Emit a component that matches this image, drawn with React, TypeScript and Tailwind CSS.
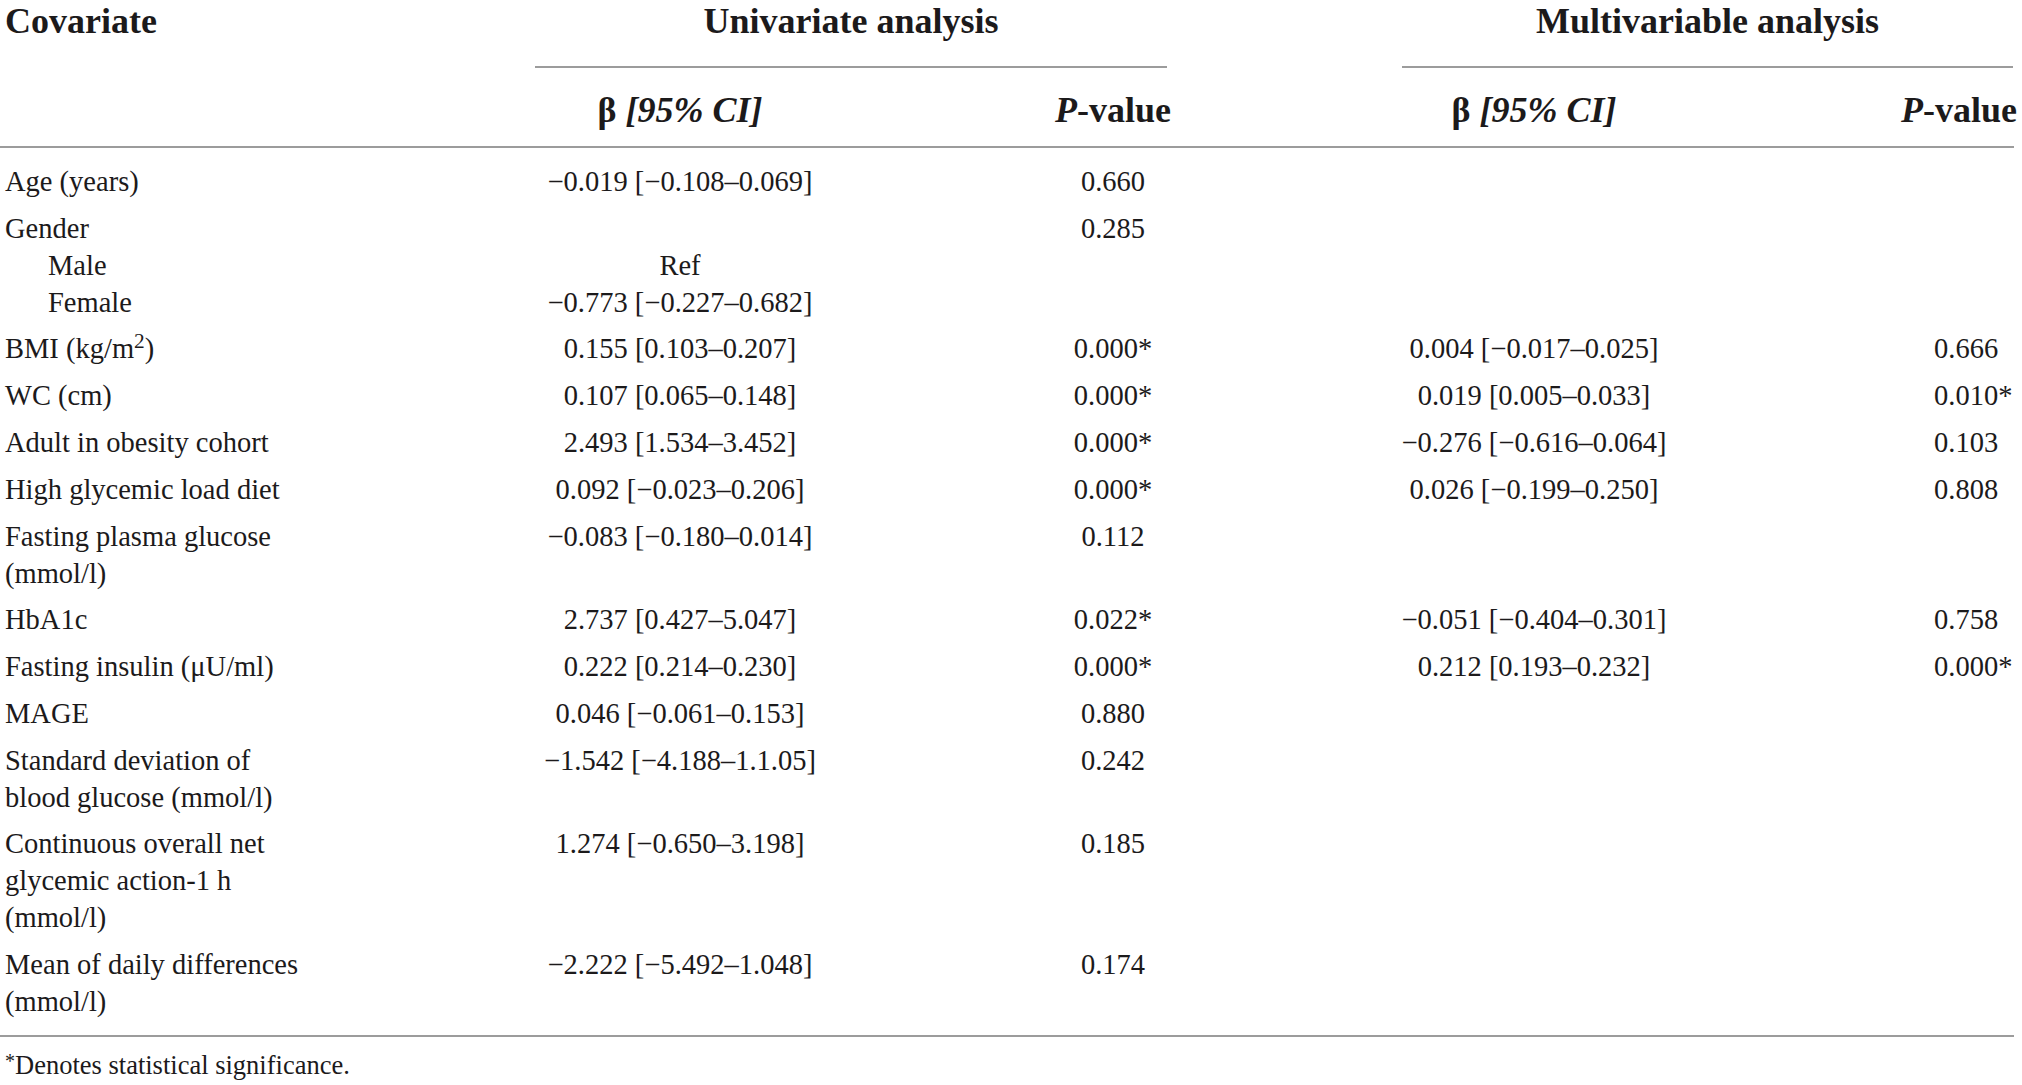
import React from 'react';

type Row = {
  label: React.ReactNode;
  indent?: boolean;
  ub?: string;
  up?: string;
  mb?: string;
  mp?: string;
  pt?: boolean;
  pb?: boolean;
};

const rows: Row[] = [
  { label: 'Age (years)', ub: '−0.019 [−0.108–0.069]', up: '0.660', pt: true, pb: true },
  { label: 'Gender', up: '0.285', pt: true },
  { label: 'Male', indent: true, ub: 'Ref' },
  { label: 'Female', indent: true, ub: '−0.773 [−0.227–0.682]', pb: true },
  {
    label: (
      <>
        BMI (kg/m<sup>2</sup>)
      </>
    ),
    ub: '0.155 [0.103–0.207]',
    up: '0.000*',
    mb: '0.004 [−0.017–0.025]',
    mp: '0.666',
    pt: true,
    pb: true,
  },
  { label: 'WC (cm)', ub: '0.107 [0.065–0.148]', up: '0.000*', mb: '0.019 [0.005–0.033]', mp: '0.010*', pt: true, pb: true },
  { label: 'Adult in obesity cohort', ub: '2.493 [1.534–3.452]', up: '0.000*', mb: '−0.276 [−0.616–0.064]', mp: '0.103', pt: true, pb: true },
  { label: 'High glycemic load diet', ub: '0.092 [−0.023–0.206]', up: '0.000*', mb: '0.026 [−0.199–0.250]', mp: '0.808', pt: true, pb: true },
  {
    label: (
      <>
        Fasting plasma glucose
        <br />
        (mmol/l)
      </>
    ),
    ub: '−0.083 [−0.180–0.014]',
    up: '0.112',
    pt: true,
    pb: true,
  },
  { label: 'HbA1c', ub: '2.737 [0.427–5.047]', up: '0.022*', mb: '−0.051 [−0.404–0.301]', mp: '0.758', pt: true, pb: true },
  { label: 'Fasting insulin (μU/ml)', ub: '0.222 [0.214–0.230]', up: '0.000*', mb: '0.212 [0.193–0.232]', mp: '0.000*', pt: true, pb: true },
  { label: 'MAGE', ub: '0.046 [−0.061–0.153]', up: '0.880', pt: true, pb: true },
  {
    label: (
      <>
        Standard deviation of
        <br />
        blood glucose (mmol/l)
      </>
    ),
    ub: '−1.542 [−4.188–1.1.05]',
    up: '0.242',
    pt: true,
    pb: true,
  },
  {
    label: (
      <>
        Continuous overall net
        <br />
        glycemic action-1 h
        <br />
        (mmol/l)
      </>
    ),
    ub: '1.274 [−0.650–3.198]',
    up: '0.185',
    pt: true,
    pb: true,
  },
  {
    label: (
      <>
        Mean of daily differences
        <br />
        (mmol/l)
      </>
    ),
    ub: '−2.222 [−5.492–1.048]',
    up: '0.174',
    pt: true,
    pb: true,
  },
];

const Rule: React.FC<{ className?: string }> = ({ className = '' }) => (
  <div className={`h-[2px] bg-[#9c9c9c] ${className}`} />
);

const BodyRow: React.FC<{ row: Row }> = ({ row }) => {
  const pad = `${row.pt ? 'pt-[4.9px]' : ''} ${row.pb ? 'pb-[4.9px]' : ''}`;
  return (
    <div className={`grid grid-cols-[535px_290px_576px_266px_234px_1fr] leading-[37px] ${pad}`}>
      <div className={row.indent ? 'pl-[48px]' : 'pl-[5px]'}>{row.label}</div>
      <div className="text-center whitespace-nowrap">{row.ub}</div>
      <div className="text-center">{row.up}</div>
      <div className="text-center whitespace-nowrap">{row.mb}</div>
      <div />
      <div className="pl-[33px]">{row.mp}</div>
    </div>
  );
};

export default function App() {
  return (
    <div className="w-[2022px] min-h-[1085px] bg-white text-[#1c1a1b] font-['Liberation_Serif',serif] text-[28.5px]">
      <div className="w-[2014px]">
        {/* group headers */}
        <div className="grid grid-cols-[535px_632px_235px_611px] font-bold text-[36px] leading-[42px]">
          <div className="pl-[5px]">Covariate</div>
          <div className="text-center">Univariate analysis</div>
          <div />
          <div className="text-center">Multivariable analysis</div>
        </div>
        <div className="grid grid-cols-[535px_632px_235px_611px] mt-[24px]">
          <div />
          <Rule />
          <div />
          <Rule />
        </div>

        {/* column headers */}
        <div className="grid grid-cols-[535px_290px_576px_266px_234px_1fr] items-center h-[78px] pt-[5px] font-bold text-[36px]">
          <div />
          <div className="text-center whitespace-nowrap">
            β <span className="italic">[95% CI]</span>
          </div>
          <div className="text-center">
            <span className="italic">P</span>-value
          </div>
          <div className="text-center whitespace-nowrap">
            β <span className="italic">[95% CI]</span>
          </div>
          <div />
          <div className="whitespace-nowrap">
            <span className="italic">P</span>-value
          </div>
        </div>
        <Rule />

        <div className="pt-[10px] pb-[10px]">
          {rows.map((r, i) => (
            <BodyRow key={i} row={r} />
          ))}
        </div>
        <Rule />
        <div className="mt-[10px] pl-[5px] leading-[37px] text-[26.5px]">
          <sup className="text-[20px] top-[-0.3em]">*</sup>Denotes statistical significance.
        </div>
      </div>
    </div>
  );
}
